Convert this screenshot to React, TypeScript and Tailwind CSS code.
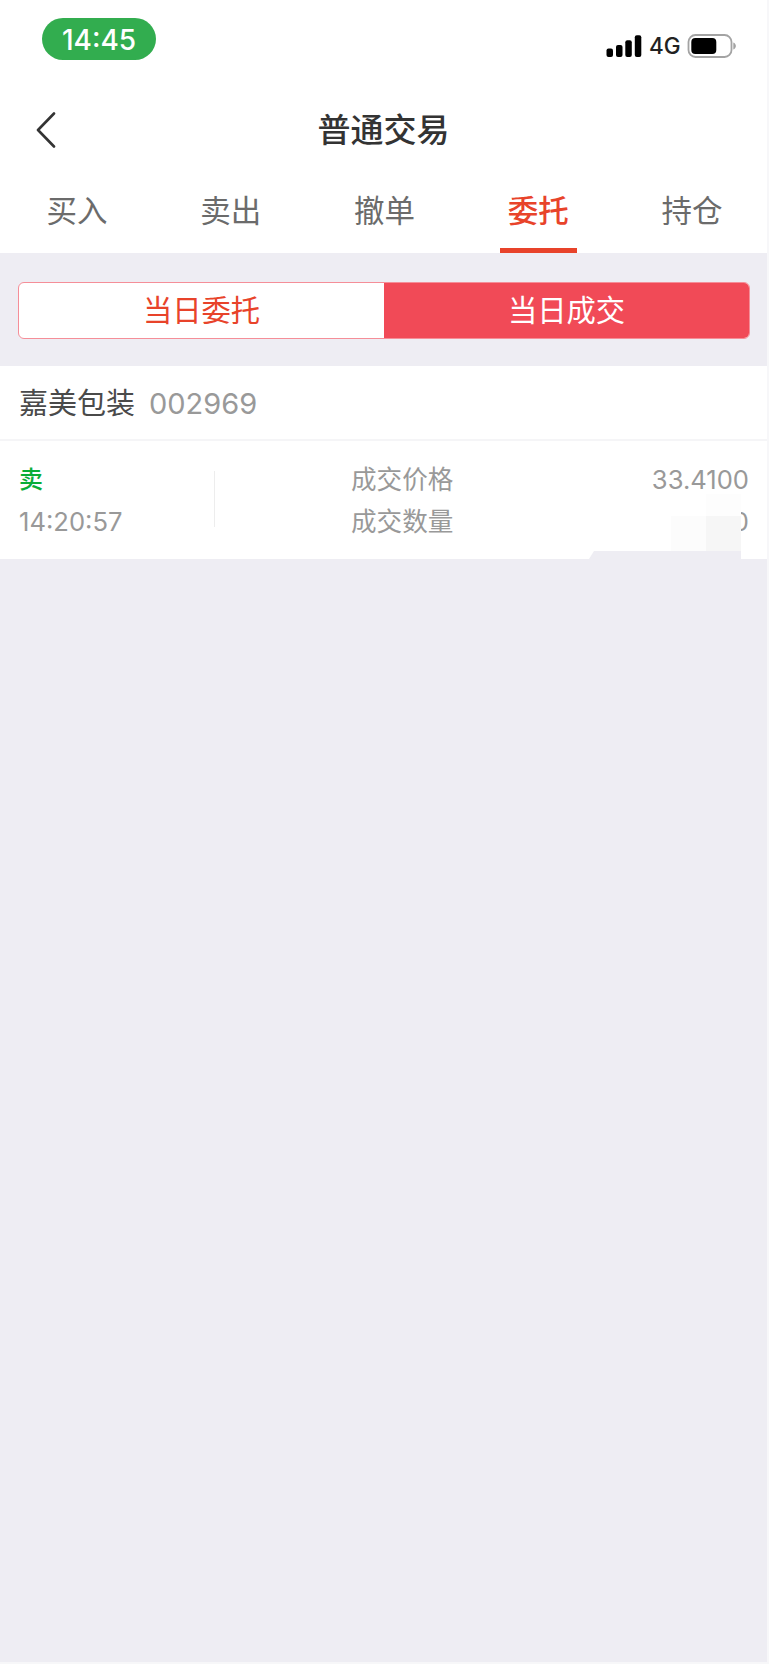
import clsx from 'clsx';

const tabs = ['买入', '卖出', '撤单', '委托', '持仓'];

const StatusBar = () => (
  <div className="flex h-[90px] items-start justify-between pl-[42px] pr-[30px] pt-[18px]">
    <div className="flex h-[42px] w-[114px] items-center justify-center rounded-full bg-[#32ad4f] text-[28px] font-medium leading-none text-white">
      <span className="pt-px">14:45</span>
    </div>
    <div className="mt-[16px] flex h-6 items-center">
      <svg width="36" height="22" viewBox="0 0 36 22" className="fill-black">
        <rect x="0.5" y="13.5" width="6.5" height="8.5" rx="2" />
        <rect x="10" y="10" width="6.5" height="12" rx="2" />
        <rect x="19.3" y="5.3" width="6.5" height="16.7" rx="2" />
        <rect x="28.8" y="0.3" width="6.5" height="21.7" rx="2" />
      </svg>
      <span className="ml-[7px] w-[38px] pt-px text-[22.5px] font-medium leading-none text-[#222]">4G</span>
      <svg width="50" height="24" viewBox="0 0 50 24">
        <rect x="1.5" y="1" width="43" height="22" rx="7" fill="none" stroke="#a3a3a3" strokeWidth="1.8" />
        <rect x="4.3" y="4" width="25" height="16" rx="4" fill="#000" />
        <path d="M46.3 8.5c3.4 1.2 3.4 5.8 0 7z" fill="#a3a3a3" />
      </svg>
    </div>
  </div>
);

const Header = () => (
  <div className="grid h-20 grid-cols-[100px_1fr_100px] items-center">
    <button className="pl-9" aria-label="返回">
      <svg width="20" height="36" viewBox="0 0 20 36" fill="none" stroke="#333" strokeWidth="2.6" strokeLinecap="round" strokeLinejoin="round">
        <path d="M18 1.5 2 18l16 16.5" />
      </svg>
    </button>
    <h1 className="pt-px text-center text-[33px] font-medium leading-none text-[#333]">普通交易</h1>
  </div>
);

const TabBar = ({ active }: { active: string }) => (
  <div className="-mr-0.5 grid h-[83px] grid-cols-5">
    {tabs.map((tab) => (
      <button
        key={tab}
        className={clsx(
          'flex flex-col items-center justify-between pt-[26px] text-[30.5px] leading-[30px]',
          tab === active ? 'font-medium text-[#e8432a]' : 'text-[#6b6b6b]'
        )}
      >
        <span>{tab}</span>
        <span className={clsx('h-[5px] w-[77px]', tab === active && 'bg-[#e8432a]')} />
      </button>
    ))}
  </div>
);

const SegmentedControl = () => (
  <div className="pb-[27px] pl-[18px] pr-[17px] pt-[29px]">
    <div className="grid h-[57px] grid-cols-2 overflow-hidden rounded-md border border-[#f58e98] bg-white text-[29.3px] leading-none">
      <button className="text-[#e8432a]">当日委托</button>
      <button className="bg-[#f14a57] text-white">当日成交</button>
    </div>
  </div>
);

const TradeItem = () => (
  <div className="relative h-[193px] bg-white">
    <div className="flex h-[75px] items-center border-b-2 border-[#f5f5f7] pl-[19px] pt-px text-[29px] leading-none">
      <span className="text-[#4a4a4a]">嘉美包装</span>
      <span className="ml-[14px] text-[29px] text-[#999]">002969</span>
    </div>
    <div className="flex pl-[19px] pr-[18px] pt-[18px] text-[25.6px] leading-[42px] text-[#999]">
      <div className="w-[195px]">
        <div className="text-[24px] font-medium text-[#0aad36]">卖</div>
        <div>14:20:57</div>
      </div>
      <div className="mt-3 h-[56px] w-px bg-[#ededed]" />
      <div className="ml-[136px]">
        <div>成交价格</div>
        <div>成交数量</div>
      </div>
      <div className="ml-auto text-right">
        <div>33.4100</div>
        <div>0</div>
      </div>
    </div>
    {/* mosaic hiding the traded quantity */}
    <svg className="absolute bottom-0 right-[26px]" width="152" height="68" viewBox="0 0 152 68">
      <path d="M82 25h70v35H82z" fill="#fcfcfc" />
      <path d="M117 3h35v22h-35z" fill="#fdfdfd" />
      <path d="M117 25h35v35h-35z" fill="#f6f6f6" />
      <path d="M0 68l5-8h147v8z" fill="#eeedf3" />
    </svg>
  </div>
);

const App = () => {
  return (
    <div className="h-[1664px] w-[769px] overflow-hidden border-b-2 border-r-2 border-[#f7f7f9] bg-[#eeedf3] font-['Inter','Noto_Sans_CJK_SC',sans-serif]">
      <div className="bg-white">
        <StatusBar />
        <Header />
        <TabBar active="委托" />
      </div>
      <SegmentedControl />
      <TradeItem />
    </div>
  );
};

export default App;
